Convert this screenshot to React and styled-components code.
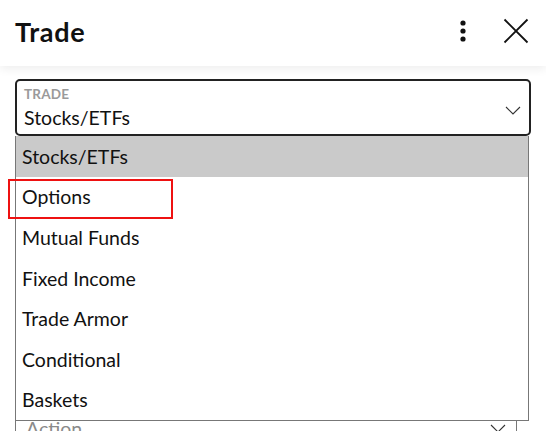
import React from "react";
import styled, { createGlobalStyle } from "styled-components";

const Global = createGlobalStyle`
  html, body { margin: 0; padding: 0; background: #fff; }
  body { font-family: Lato, "Open Sans", sans-serif; color: #111; overflow: hidden; }
  * { box-sizing: border-box; }
`;

const Page = styled.div`
  width: 546px;
  height: 431px;
  overflow: hidden;
  display: flex;
  flex-direction: column;
`;

const Header = styled.header`
  height: 66px;
  flex: none;
  display: flex;
  align-items: center;
  padding: 0 17px 4px 15px;
  background: #fff;
  box-shadow: 0 3px 9px rgba(0, 0, 0, 0.07);
  position: relative;
  z-index: 2;
`;

const Title = styled.h1`
  margin: 0;
  flex: 1;
  font-size: 27px;
  font-weight: 700;
  letter-spacing: 0.7px;
  color: #111;
`;

const IconButton = styled.button`
  border: 0;
  background: none;
  padding: 0;
  margin-left: ${(p) => p.$gap || 0}px;
  display: flex;
  align-items: center;
  justify-content: center;
  color: #111;
`;

const Body = styled.div`
  flex: none;
  padding: 13px 15px 0 15px;
  display: flex;
  flex-direction: column;
  gap: 23px;
`;

const FieldWrap = styled.div`
  position: relative;
  flex: none;
  margin-right: ${(p) => p.$inset || 0}px;
`;

const Field = styled.div`
  height: ${(p) => p.$h || 57}px;
  border: ${(p) => (p.$active ? "2px solid #222" : "1px solid #777")};
  border-radius: ${(p) => (p.$active ? "5px" : "3px")};
  padding: ${(p) => (p.$active ? "6px 8px 0 7px" : "0 10px")};
  display: flex;
  align-items: ${(p) => (p.$active ? "flex-start" : "center")};
  justify-content: space-between;
  background: #fff;
`;

const FieldText = styled.div`
  display: flex;
  flex-direction: column;
`;

const Label = styled.span`
  font-size: 13.5px;
  font-weight: 700;
  color: #9a9a9a;
  letter-spacing: 0.2px;
  line-height: 14px;
`;

const Value = styled.span`
  font-size: 19.5px;
  line-height: 24px;
  margin-top: ${(p) => p.$mt || 0}px;
  color: ${(p) => (p.$placeholder ? "#8a8a8a" : "#111")};
`;

const Chevron = styled.svg`
  margin-top: ${(p) => p.$mt || 0}px;
  flex: none;
`;

const Menu = styled.ul`
  position: absolute;
  left: 0;
  top: 100%;
  width: 514px;
  margin: 0;
  padding: 0;
  list-style: none;
  background: #fff;
  border: 1px solid #777;
  border-top: 0;
  z-index: 5;
`;

const Option = styled.li`
  height: 40.6px;
  display: flex;
  align-items: center;
  padding-left: 6px;
  font-size: 19.5px;
  color: #111;
  background: ${(p) => (p.$selected ? "#cacaca" : "#fff")};
  position: relative;
  z-index: ${(p) => (p.$marked ? 2 : 1)};
`;

const Highlight = styled.span`
  position: absolute;
  left: -8px;
  top: 2px;
  width: 165px;
  height: 40px;
  border: 2px solid #ee1111;
  pointer-events: none;
`;

const ChevronIcon = ({ mt }) => (
  <Chevron $mt={mt} width="16" height="9" viewBox="0 0 16 9">
    <path d="M1 1 L8 8 L15 1" fill="none" stroke="#333" strokeWidth="1.1" />
  </Chevron>
);

const items = [
  "Stocks/ETFs",
  "Options",
  "Mutual Funds",
  "Fixed Income",
  "Trade Armor",
  "Conditional",
  "Baskets",
];

export default function App() {
  return (
    <Page>
      <Global />
      <Header>
        <Title>Trade</Title>
        <IconButton aria-label="More">
          <svg width="8" height="24" viewBox="0 0 8 24">
            <circle cx="4" cy="4" r="2.6" fill="#111" />
            <circle cx="4" cy="12" r="2.6" fill="#111" />
            <circle cx="4" cy="20" r="2.6" fill="#111" />
          </svg>
        </IconButton>
        <IconButton $gap={36} aria-label="Close">
          <svg width="26" height="26" viewBox="0 0 26 26">
            <path d="M1.5 1.5 L24.5 24.5 M24.5 1.5 L1.5 24.5" stroke="#111" strokeWidth="1.8" />
          </svg>
        </IconButton>
      </Header>
      <Body>
        <FieldWrap>
          <Field $active>
            <FieldText>
              <Label>TRADE</Label>
              <Value $mt={5}>Stocks/ETFs</Value>
            </FieldText>
            <ChevronIcon mt={19} />
          </Field>
          <Menu>
            {items.map((it, i) => (
              <Option key={it} $selected={i === 0} $marked={it === "Options"}>
                {it}
                {it === "Options" && <Highlight />}
              </Option>
            ))}
          </Menu>
        </FieldWrap>
        <FieldWrap $inset={14}>
          <Field>
            <Value $placeholder>Account</Value>
            <ChevronIcon />
          </Field>
        </FieldWrap>
        <FieldWrap $inset={14}>
          <Field>
            <Value $placeholder>Symbol</Value>
          </Field>
        </FieldWrap>
        <FieldWrap $inset={14}>
          <Field $h={58}>
            <Value $placeholder>Quantity</Value>
          </Field>
        </FieldWrap>
        <FieldWrap $inset={14}>
          <Field>
            <Value $placeholder>Action</Value>
            <ChevronIcon />
          </Field>
        </FieldWrap>
      </Body>
    </Page>
  );
}
